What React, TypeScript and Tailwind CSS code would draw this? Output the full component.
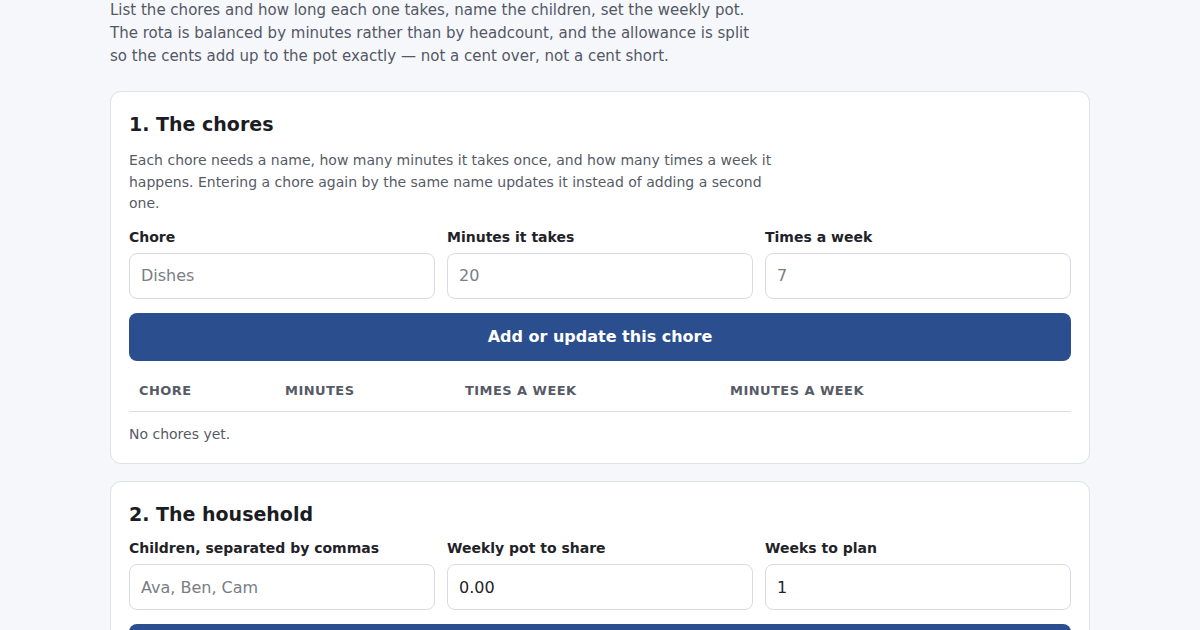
import React from 'react';

const font = { fontFamily: '"DejaVu Sans", sans-serif' };

const Field = ({ label, placeholder, value }: { label: string; placeholder?: string; value?: string }) => (
  <label className="flex flex-col">
    <span className="text-[14px] leading-[17px] font-bold text-[#1f2329] mb-[7px]">{label}</span>
    <input
      className="h-[46px] w-full rounded-[8px] border border-[#d8dbe3] bg-white px-[11px] text-[16px] text-[#1f2329] placeholder:text-[#7a7d84] outline-none"
      placeholder={placeholder}
      defaultValue={value}
      style={font}
    />
  </label>
);

export default function App() {
  return (
    <div className="min-h-screen bg-[#f6f7fb]" style={font}>
      <div className="mx-auto w-[980px] -mt-[1px] pb-10">
        <p className="max-w-[650px] text-[15px] leading-[23px] text-[#535865]">
          List the chores and how long each one takes, name the children, set the weekly pot. The rota is balanced by
          minutes rather than by headcount, and the allowance is split so the cents add up to the pot exactly — not a
          cent over, not a cent short.
        </p>

        {/* Chores */}
        <section className="mt-[23px] rounded-[11px] border border-[#dfe2ea] bg-white px-[18px] pt-[19px] pb-[19px]">
          <h2 className="text-[19px] leading-[26px] font-bold text-[#1a1d23]">1. The chores</h2>
          <p className="mt-[13px] max-w-[650px] text-[14px] leading-[21.5px] text-[#565b66]">
            Each chore needs a name, how many minutes it takes once, and how many times a week it happens. Entering a
            chore again by the same name updates it instead of adding a second one.
          </p>
          <div className="mt-[14px] grid grid-cols-3 gap-[12px]">
            <Field label="Chore" placeholder="Dishes" />
            <Field label="Minutes it takes" placeholder="20" />
            <Field label="Times a week" placeholder="7" />
          </div>
          <button
            className="mt-[14px] h-[48px] w-full rounded-[8px] bg-[#2b4e8f] text-[16px] font-bold text-white"
            style={font}
          >
            Add or update this chore
          </button>
          <table className="mt-[9px] w-full border-collapse text-left">
            <thead>
              <tr className="border-b border-[#dcdfe6]">
                <th className="w-[146px] px-[10px] py-[11px] text-[13px] font-bold uppercase tracking-[0.45px] text-[#565b66]">Chore</th>
                <th className="w-[180px] px-[10px] py-[11px] text-[13px] font-bold uppercase tracking-[0.45px] text-[#565b66]">Minutes</th>
                <th className="w-[265px] px-[10px] py-[11px] text-[13px] font-bold uppercase tracking-[0.45px] text-[#565b66]">Times a week</th>
                <th className="px-[10px] py-[11px] text-[13px] font-bold uppercase tracking-[0.45px] text-[#565b66]">Minutes a week</th>
              </tr>
            </thead>
          </table>
          <p className="mt-[12px] text-[14px] leading-[20px] text-[#565b66]">No chores yet.</p>
        </section>

        {/* Household */}
        <section className="mt-[17px] rounded-[11px] border border-[#dfe2ea] bg-white px-[18px] pt-[19px] pb-[18px]">
          <h2 className="text-[19px] leading-[26px] font-bold text-[#1a1d23]">2. The household</h2>
          <div className="mt-[13px] grid grid-cols-3 gap-[12px]">
            <Field label="Children, separated by commas" placeholder="Ava, Ben, Cam" />
            <Field label="Weekly pot to share" value="0.00" />
            <Field label="Weeks to plan" value="1" />
          </div>
          <button
            className="mt-[14px] h-[48px] w-full rounded-[8px] bg-[#2b4e8f] text-[16px] font-bold text-white"
            style={font}
          >
            Plan the rota
          </button>
        </section>
      </div>
    </div>
  );
}
